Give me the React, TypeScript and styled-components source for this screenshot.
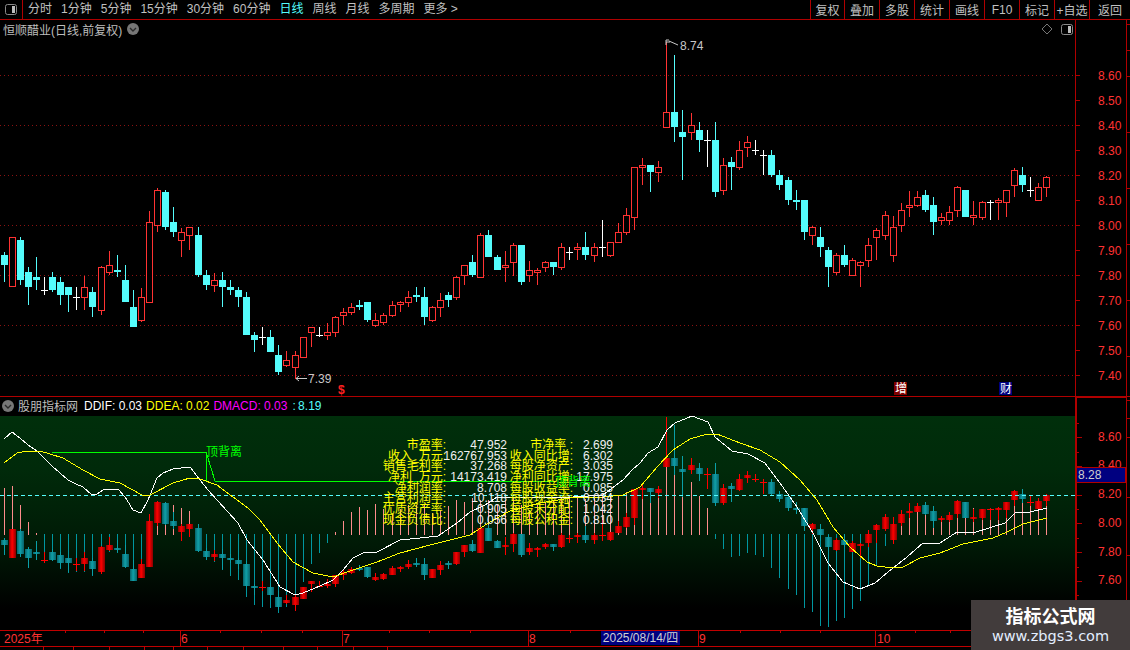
import React from "react";
import styled, { createGlobalStyle } from "styled-components";

const FONT = `"Liberation Sans", "Noto Sans CJK SC", sans-serif`;

const GlobalStyle = createGlobalStyle`
  html, body { margin: 0; padding: 0; background: #000; }
  body { font-family: ${FONT}; font-size: 12px; }
`;

type Row = [number, number, number, number, number];
type Kind = "r" | "c" | "w";
interface Candle { x: number; hi: number; top: number; bot: number; lo: number; kind: Kind; }

const seg = (ox: number, oy: number, rows: [Kind, ...Row][]): Candle[] =>
  rows.map(([kind, zx, h, t, b, l]) => ({
    kind,
    x: Math.floor(ox + zx / 3),
    hi: Math.round(oy + h / 3),
    top: Math.round(oy + t / 3),
    bot: Math.round(oy + b / 3),
    lo: Math.round(oy + l / 3),
  }));

const candles: Candle[] = [
  ...seg(0, 180, [
    ["c", 13, 215, 225, 255, 305], ["r", 37, 172, 172, 322, 322], ["c", 61, 170, 180, 300, 315],
    ["c", 85, 261, 276, 321, 375], ["c", 109, 231, 291, 300, 330], ["w", 133, 291, 331, 331, 345],
    ["c", 157, 276, 291, 330, 335], ["c", 181, 291, 306, 345, 375], ["c", 205, 321, 321, 345, 396],
    ["w", 229, 321, 352, 352, 390], ["r", 253, 288, 322, 353, 390], ["c", 277, 321, 336, 381, 411],
    ["r", 304, 258, 262, 392, 404], ["r", 328, 213, 256, 278, 285], ["c", 352, 225, 270, 276, 291],
    ["c", 376, 255, 300, 366, 366], ["c", 400, 330, 381, 441, 441], ["r", 424, 324, 352, 422, 426],
    ["r", 448, 93, 127, 368, 369], ["r", 472, 24, 31, 137, 156], ["c", 496, 30, 36, 141, 150],
    ["c", 520, 81, 126, 156, 171], ["r", 544, 144, 157, 182, 231], ["r", 568, 141, 142, 167, 210],
    ["c", 595, 141, 165, 285, 291], ["c", 619, 270, 285, 315, 330], ["r", 643, 279, 301, 317, 336],
    ["c", 667, 276, 300, 321, 381], ["c", 691, 300, 321, 330, 345], ["c", 715, 321, 330, 351, 381],
    ["c", 739, 336, 351, 465, 465], ["c", 763, 456, 465, 480, 516], ["w", 787, 441, 471, 471, 495],
    ["c", 811, 450, 471, 516, 516], ["c", 835, 495, 525, 576, 585],
  ]),
  ...seg(280, 180, [
    ["r", 19, 513, 541, 557, 561], ["r", 46, 513, 526, 563, 596], ["r", 70, 472, 472, 533, 533],
    ["r", 94, 441, 442, 458, 501], ["w", 118, 441, 466, 466, 471], ["r", 142, 429, 457, 467, 480],
    ["r", 166, 408, 412, 458, 471], ["r", 190, 384, 397, 407, 435], ["r", 214, 369, 382, 398, 405],
    ["c", 238, 360, 375, 381, 390], ["c", 262, 366, 366, 420, 426], ["r", 286, 399, 421, 437, 441],
    ["r", 310, 399, 406, 429, 435], ["r", 337, 363, 376, 408, 411], ["r", 361, 363, 367, 376, 396],
    ["r", 385, 333, 352, 368, 381], ["c", 409, 321, 345, 351, 366], ["c", 433, 321, 351, 411, 435],
    ["r", 457, 378, 382, 422, 426], ["r", 481, 339, 361, 383, 411], ["c", 505, 336, 345, 360, 381],
    ["r", 529, 288, 292, 353, 360], ["r", 553, 255, 256, 287, 315], ["c", 577, 225, 246, 285, 291],
    ["r", 601, 159, 166, 293, 294], ["c", 625, 150, 165, 231, 231], ["c", 652, 225, 231, 270, 270],
    ["r", 676, 213, 256, 263, 306], ["r", 700, 189, 196, 248, 288], ["c", 724, 195, 195, 306, 315],
    ["r", 748, 243, 271, 287, 306], ["r", 772, 264, 271, 278, 315], ["r", 796, 243, 247, 263, 276],
    ["c", 820, 246, 246, 261, 285],
  ]),
  ...seg(560, 30, [
    ["r", 4, 640, 652, 713, 720], ["w", 27, 651, 666, 666, 690], ["r", 52, 640, 652, 661, 690],
    ["c", 76, 606, 652, 675, 690], ["r", 103, 640, 652, 677, 696], ["w", 127, 570, 652, 652, 681],
    ["r", 151, 636, 637, 677, 681], ["r", 175, 579, 607, 638, 639], ["r", 199, 534, 556, 608, 615],
    ["r", 223, 412, 412, 563, 600], ["r", 247, 384, 406, 413, 465], ["c", 271, 405, 405, 426, 486],
    ["r", 295, 393, 412, 428, 456], ["r", 319, 37, 247, 293, 293], ["c", 343, 75, 246, 291, 336],
    ["c", 367, 240, 306, 321, 450], ["r", 394, 249, 286, 308, 330], ["c", 418, 276, 300, 330, 366],
    ["w", 442, 300, 331, 331, 411], ["c", 466, 276, 330, 486, 501], ["r", 490, 384, 406, 482, 495],
    ["c", 514, 381, 396, 411, 480], ["r", 538, 333, 361, 413, 420], ["r", 562, 318, 337, 353, 381],
    ["w", 586, 330, 361, 361, 375], ["w", 610, 360, 376, 376, 435], ["c", 634, 360, 375, 435, 441],
    ["c", 658, 420, 435, 465, 480], ["c", 685, 441, 450, 510, 525], ["c", 709, 480, 510, 516, 540],
    ["c", 733, 510, 510, 606, 630], ["r", 757, 588, 592, 617, 645], ["c", 781, 591, 621, 651, 681],
    ["c", 805, 651, 660, 711, 771], ["r", 829, 669, 676, 728, 735],
  ]),
  ...seg(800, 140, [
    ["c", 133, 315, 345, 375, 381], ["r", 157, 354, 361, 407, 408], ["r", 181, 363, 367, 377, 441],
    ["r", 205, 294, 316, 362, 381], ["r", 229, 264, 271, 293, 360], ["r", 256, 213, 226, 287, 300],
    ["r", 280, 228, 262, 347, 366], ["r", 304, 189, 211, 257, 276], ["r", 328, 153, 196, 203, 231],
    ["r", 352, 153, 172, 197, 201], ["c", 376, 150, 165, 210, 216], ["c", 400, 171, 195, 246, 285],
    ["r", 424, 219, 232, 242, 256], ["r", 448, 198, 217, 242, 256], ["r", 472, 138, 142, 212, 231],
    ["c", 496, 150, 150, 231, 231], ["r", 520, 183, 226, 233, 255], ["r", 547, 183, 187, 233, 240],
    ["w", 571, 180, 187, 187, 240], ["r", 595, 174, 181, 188, 240], ["r", 619, 151, 151, 188, 231],
    ["r", 643, 84, 91, 137, 171], ["c", 667, 81, 105, 135, 156], ["w", 691, 111, 151, 151, 171],
    ["r", 715, 129, 142, 182, 183], ["r", 739, 108, 112, 143, 171],
  ]),
];

const histY = [
  488, 486, 505, 522, 533, 560, 553, 569, 573, 572, 572, 576, 573, 552, 553, 568, 580, 577, 538, 505,
  505, 505, 508, 511, 533, 557, 562, 570, 576, 580, 597, 605, 607, 608, 613, 607, 610, 582, 564, 553,
  543, 532, 521, 512, 507, 510, 504, 509, 514, 509, 505, 505, 504, 513, 510, 506, 500, 502, 498, 500,
  500, 505, 500, 498, 505, 510, 505, 503, 500, 498, 495, 497, 499, 495, 493, 493, 495, 492, 490, 487,
  488, 493, 467, 467, 478, 482, 496, 508, 539, 549, 557, 556, 553, 555, 557, 568, 578, 589, 595, 608,
  612, 626, 627, 621, 618, 609, 601, 585, 566, 546, 530, 521, 503, 508, 507, 508, 517, 515, 502, 513,
  508, 510, 508, 508, 503, 490, 495, 503, 500, 497,
];

const whiteLine = `4,439 12,432 20,438 28,445 37,451 52,466 68,480 76,484 83,487 92,495 97,494 103,490 118,489 125,497 127,500 133,510 141,513 148,500 157,478 163,473 173,469 190,467 200,480 208,490 217,500 238,523 247,540 263,560 280,587 295,595 303,593 320,586 333,580 343,570 353,558 363,553 377,552 400,540 420,538 438,536 457,523 470,512 485,505 497,497 573,497 603,495 623,480 632,470 640,463 648,453 658,447 667,430 675,423 692,416 708,422 715,437 732,451 748,454 765,463 780,483 797,507 813,533 828,563 843,582 860,589 875,583 888,572 907,557 923,543 940,543 957,532 973,533 1005,523 1015,513 1030,512 1047,508`;
const yellowLine = `4,463 17,453 28,451 40,451 63,458 83,470 100,479 120,483 142,495 150,495 173,483 190,478 200,479 217,485 233,497 248,508 260,520 277,543 293,562 313,573 333,577 353,570 377,562 400,553 430,545 470,535 490,522 510,511 540,503 570,498 603,497 623,495 640,487 657,467 673,450 690,439 707,434 717,434 740,443 760,450 780,462 800,480 817,500 833,527 850,547 867,562 877,566 893,568 903,567 920,558 940,553 963,544 993,538 1007,532 1023,524 1047,518`;

const toLower = (y: number) => Math.round(523 + (y - 226) * 0.574);

const RED = "#ff3232";
const CYAN = "#54fcfc";

const UpperCandle: React.FC<{ c: Candle }> = ({ c }) => {
  const wx = c.x + 0.5;
  if (c.kind === "w") {
    return (
      <g stroke="#fff">
        <line x1={wx} x2={wx} y1={c.hi} y2={c.lo} />
        <line x1={c.x - 3} x2={c.x + 4} y1={c.top + 0.5} y2={c.top + 0.5} />
      </g>
    );
  }
  if (c.kind === "c") {
    return (
      <g>
        <line x1={wx} x2={wx} y1={c.hi} y2={c.lo} stroke={CYAN} />
        <rect x={c.x - 3} y={c.top} width={7} height={Math.max(2, c.bot - c.top)} fill={CYAN} />
      </g>
    );
  }
  return (
    <g stroke={RED} fill="#000">
      <line x1={wx} x2={wx} y1={c.hi} y2={c.top} />
      <line x1={wx} x2={wx} y1={c.bot} y2={c.lo} />
      <rect x={c.x - 2.5} y={c.top + 0.5} width={6} height={Math.max(2, c.bot - c.top - 1)} />
    </g>
  );
};

const LowerCandle: React.FC<{ c: Candle }> = ({ c }) => {
  const wx = c.x + 0.5;
  const top = toLower(c.top);
  const bot = toLower(c.bot);
  const hi = toLower(c.hi);
  const lo = toLower(c.lo);
  if (c.kind === "w") {
    return (
      <g stroke="#f00">
        <line x1={wx} x2={wx} y1={hi} y2={lo} />
        <line x1={c.x - 3} x2={c.x + 4} y1={top + 0.5} y2={top + 0.5} />
      </g>
    );
  }
  const teal = c.kind === "c";
  return (
    <g>
      <line x1={wx} x2={wx} y1={hi} y2={lo} stroke={teal ? "#0aa0a8" : "#f00"} />
      <rect x={c.x - 3} y={top} width={7} height={Math.max(2, bot - top)} fill={teal ? "url(#tealBody)" : "url(#redBody)"} />
    </g>
  );
};

const Screen = styled.div`
  position: relative;
  width: 1130px;
  height: 650px;
  overflow: hidden;
  background: #000;
  color: #c0c0c0;
  font-family: ${FONT};
  font-size: 12px;
  display: flex;
  flex-direction: column;
`;

const Toolbar = styled.div`
  display: flex;
  align-items: stretch;
  height: 19px;
  border-bottom: 1px solid #b00000;
  flex: none;
`;

const ToggleBox = styled.div`
  width: 23px;
  border-right: 1px solid #b00000;
  box-sizing: border-box;
  display: flex;
  align-items: center;
  justify-content: center;
`;

const MenuList = styled.div`
  display: flex;
  align-items: center;
  gap: 9px;
  padding-left: 5px;
  flex: 1;
`;

const MenuItem = styled.span<{ $active?: boolean }>`
  color: ${(p) => (p.$active ? "#54fcfc" : "#c0c0c0")};
  white-space: nowrap;
  line-height: 19px;
`;

const ToolButton = styled.div<{ $w: number }>`
  width: ${(p) => p.$w}px;
  border-left: 1px solid #b00000;
  box-sizing: border-box;
  display: flex;
  align-items: center;
  justify-content: center;
  white-space: nowrap;
`;

const UpperPanel = styled.div`
  display: flex;
  height: 377px;
  flex: none;
  border-bottom: 1px solid #b00000;
  box-sizing: border-box;
`;

const Plot = styled.div`
  position: relative;
  width: 1075px;
  flex: none;
  svg { display: block; }
`;

const TitleOverlay = styled.div`
  position: absolute;
  left: 3px;
  top: 1px;
  display: flex;
  align-items: center;
  gap: 5px;
  height: 16px;
  color: #bdbdbd;
  white-space: nowrap;
`;

const CornerIcons = styled.div`
  position: absolute;
  right: 2px;
  top: 3px;
  display: flex;
  align-items: center;
  gap: 8px;
`;

const LowerSection = styled.div`
  display: flex;
  height: 233px;
  flex: none;
  position: relative;
`;

const LowerColumn = styled.div`
  width: 1075px;
  flex: none;
  display: flex;
  flex-direction: column;
`;

const IndicatorHeader = styled.div`
  height: 17px;
  padding: 0 0 2px 2px;
  display: flex;
  align-items: center;
  flex: none;
  white-space: nowrap;
`;

const IndicatorName = styled.span`
  color: #bdbdbd;
  margin: 0 6px 0 4px;
`;

const Reading = styled.span<{ $color: string; $gap: number; $tight?: boolean }>`
  color: ${(p) => p.$color};
  margin-right: ${(p) => p.$gap}px;
  word-spacing: ${(p) => (p.$tight ? "-1px" : "0")};
`;

const LowerPlot = styled(Plot)`
  height: 214px;
  background: linear-gradient(#002f0b 0%, #002a0a 25%, #001a06 60%, #000 90%);
  overflow: hidden;
`;

const PriceBadge = styled.div`
  position: absolute;
  left: 1076px;
  top: 70px;
  width: 50px;
  height: 16px;
  box-sizing: border-box;
  background: #000080;
  border: 1px solid #b00000;
  color: #cfcfcf;
  line-height: 14px;
  padding-left: 1px;
`;

const StatsGrid = styled.div`
  position: absolute;
  left: 376px;
  top: 24px;
  display: grid;
  grid-template-columns: 70px 61px 66px 40px;
  grid-auto-rows: 10.7px;
  line-height: 10.7px;
  white-space: nowrap;
`;

const StatLabel = styled.span`
  color: #ffff00;
  justify-self: end;
`;

const StatValue = styled.span`
  color: #f0f0f0;
  justify-self: end;
`;

const DivergenceTag = styled.span<{ $left: number; $top: number }>`
  position: absolute;
  left: ${(p) => p.$left}px;
  top: ${(p) => p.$top}px;
  color: #00ff00;
  white-space: nowrap;
  line-height: 14px;
`;

const DateStrip = styled.div`
  position: relative;
  height: 20px;
  flex: none;
  border-top: 1px solid #c00000;
  box-sizing: border-box;
  svg { display: block; }
`;

const DateBadge = styled.div`
  position: absolute;
  left: 601px;
  top: 0;
  width: 79px;
  height: 14px;
  background: #000080;
  color: #d0d0d0;
  line-height: 14px;
  text-align: center;
  white-space: nowrap;
`;

const Watermark = styled.div`
  position: absolute;
  right: 0;
  bottom: 0;
  width: 159px;
  height: 50px;
  padding-bottom: 3px;
  box-sizing: border-box;
  background: #423c3c;
  display: flex;
  flex-direction: column;
  align-items: center;
  justify-content: center;
  color: #fff;
`;

const WatermarkTitle = styled.div`
  font-family: "Noto Sans CJK SC", sans-serif;
  font-size: 18px;
  font-weight: 700;
  line-height: 24px;
`;

const WatermarkUrl = styled.div`
  font-family: "DejaVu Sans", sans-serif;
  font-size: 14.5px;
  line-height: 18px;
  color: #e4eeff;
`;

const toolButtons: [string, number][] = [
  ["复权", 34], ["叠加", 35], ["多股", 35], ["统计", 35], ["画线", 35],
  ["F10", 35], ["标记", 35], ["+自选", 35], ["返回", 41],
];

const menu = ["分时", "1分钟", "5分钟", "15分钟", "30分钟", "60分钟", "日线", "周线", "月线", "多周期"];

const stats: [string, string, string, string][] = [
  ["市盈率:", "47.952", "市净率 :", "2.699"],
  ["收入_万元:", "162767.953", "收入同比增:", "6.302"],
  ["销售毛利率:", "37.268", "每股净资产:", "3.035"],
  ["净利_万元:", "14173.419", "净利同比增:", "17.975"],
  ["净利润率:", "8.708", "每股收益率:", "0.085"],
  ["主营利润率:", "10.118", "每股现金流:", "0.034"],
  ["优质资产率:", "0.905", "每股未分配:", "1.042"],
  ["现金负债比:", "0.056", "每股公积金:", "0.810"],
];

const upperPrices = ["8.60", "8.50", "8.40", "8.30", "8.20", "8.10", "8.00", "7.90", "7.80", "7.70", "7.60", "7.50", "7.40"];
const lowerPrices: [string, number][] = [["8.60", 437], ["8.40", 465], ["8.20", 494], ["8.00", 523], ["7.80", 552], ["7.60", 580]];

const SideToggle: React.FC = () => (
  <svg width="12" height="11" viewBox="0 0 12 11">
    <rect x="0.5" y="0.5" width="11" height="10" rx="2" fill="none" stroke="#8a8a8a" />
    <rect x="7" y="2" width="3" height="7" fill="#bdbdbd" />
  </svg>
);

const Chevron: React.FC = () => (
  <svg width="12" height="12" viewBox="0 0 12 12">
    <circle cx="6" cy="6" r="6" fill="#777" />
    <path d="M3 5 L6 8 L9 5" fill="none" stroke="#2a2a2a" strokeWidth="1.4" />
  </svg>
);

const Grid: React.FC = () => (
  <g stroke="#8a1212" strokeDasharray="1 3" shapeRendering="crispEdges">
    {[75, 125, 175, 225, 275, 325, 375].map((y) => (
      <line key={y} x1={0} x2={1075} y1={y + 0.5} y2={y + 0.5} />
    ))}
  </g>
);

const AxisText: React.FC<{ y: number; children: string }> = ({ y, children }) => (
  <text x={1098} y={y + 4} fill="#ff3232" fontSize="12" fontFamily="Liberation Sans, sans-serif">{children}</text>
);

const UpperAxis: React.FC = () => (
  <svg width="55" height="376" viewBox="1075 20 55 376" shapeRendering="crispEdges" style={{ display: "block", flex: "none" }}>
    <line x1={1075.5} x2={1075.5} y1={20} y2={396} stroke="#b00000" />
    <line x1={1126.5} x2={1126.5} y1={20} y2={396} stroke="#b00000" />
    {upperPrices.map((p, i) => {
      const y = 76 + i * 25;
      return (
        <g key={p}>
          <line x1={1075} x2={1080} y1={y - 0.5} y2={y - 0.5} stroke="#b00000" />
          <AxisText y={y}>{p}</AxisText>
        </g>
      );
    })}
    {[24, 50, 76, 132, 188, 244, 300, 356].map((y) => (
      <line key={y} x1={1127} x2={1130} y1={y + 0.5} y2={y + 0.5} stroke="#b00000" />
    ))}
  </svg>
);

const LowerAxis: React.FC = () => (
  <svg width="55" height="233" viewBox="1075 397 55 233" shapeRendering="crispEdges" style={{ display: "block", flex: "none" }}>
    <rect x={1075} y={397} width={2} height={233} fill="#b00000" />
    <rect x={1075} y={397} width={52} height={1} fill="#b00000" />
    <line x1={1126.5} x2={1126.5} y1={397} y2={630} stroke="#b00000" />
    {Array.from({ length: 16 }, (_, i) => 423 + i * 14.35).map((y, i) => (
      <line key={i} x1={1076} x2={i % 2 === 1 ? 1082 : 1079} y1={Math.round(y) + 0.5} y2={Math.round(y) + 0.5} stroke="#b00000" />
    ))}
    {lowerPrices.map(([p, y]) => (
      <AxisText key={p} y={y}>{p}</AxisText>
    ))}
    {[400, 418, 437, 497, 555].map((y) => (
      <line key={y} x1={1127} x2={1130} y1={y + 0.5} y2={y + 0.5} stroke="#b00000" />
    ))}
  </svg>
);

const UpperChart: React.FC = () => (
  <svg width="1075" height="376" viewBox="0 20 1075 376" shapeRendering="crispEdges">
    <Grid />
    {candles.map((c, i) => <UpperCandle key={i} c={c} />)}
    <g stroke="#c8c8c8" fill="none" shapeRendering="auto">
      <path d="M666 45 V40 H669 M666 42 H670 M669 41 L678 45" />
      <path d="M296 378.5 H307 M296 378.5 L299 376 M296 378.5 L299 381" />
    </g>
    <text x={680} y={50} fill="#c8c8c8" fontSize="12" fontFamily="Liberation Sans, sans-serif">8.74</text>
    <text x={308} y={383} fill="#c8c8c8" fontSize="12" fontFamily="Liberation Sans, sans-serif">7.39</text>
    <text x={338} y={394} fill="#ff2020" fontSize="12" fontWeight="700" fontFamily="Liberation Sans, sans-serif">$</text>
    <rect x={894} y={382} width={13} height={13} fill="#800000" />
    <text x={895} y={393} fill="#fff" fontSize="12" fontFamily="Noto Sans CJK SC, sans-serif">增</text>
    <rect x={999} y={382} width={13} height={13} fill="#000080" />
    <text x={1000} y={393} fill="#fff" fontSize="12" fontFamily="Noto Sans CJK SC, sans-serif">财</text>
  </svg>
);

const LowerChart: React.FC = () => (
  <svg width="1075" height="214" viewBox="0 416 1075 214" shapeRendering="crispEdges">
    <defs>
      <linearGradient id="redBody" x1="0" x2="1" y1="0" y2="0">
        <stop offset="0" stopColor="#8a0000" />
        <stop offset="0.45" stopColor="#ff0000" />
        <stop offset="1" stopColor="#8a0000" />
      </linearGradient>
      <linearGradient id="tealBody" x1="0" x2="1" y1="0" y2="0">
        <stop offset="0" stopColor="#07626a" />
        <stop offset="0.45" stopColor="#10a0a8" />
        <stop offset="1" stopColor="#07626a" />
      </linearGradient>
    </defs>
    {candles.map((c, i) => {
      const y = histY[i];
      const up = y < 534.5;
      return (
        <line
          key={i}
          x1={c.x + 0.5}
          x2={c.x + 0.5}
          y1={y}
          y2={up ? 535 : 534}
          stroke={up ? "#ff8c8c" : "#0097a0"}
        />
      );
    })}
    {candles.map((c, i) => <LowerCandle key={i} c={c} />)}
    <line x1={0} x2={1075} y1={495.5} y2={495.5} stroke="#54fcfc" strokeDasharray="4 3" />
    <polyline points={whiteLine} fill="none" stroke="#fff" />
    <polyline points={yellowLine} fill="none" stroke="#ff0" />
    <rect x={52} y={452} width={155} height={1} fill="#00ff00" />
    <rect x={206} y={452} width={1} height={29} fill="#00ff00" />
    <line x1={207} x2={215} y1={455} y2={481} stroke="#00ff00" />
    <rect x={215} y={481} width={340} height={1} fill="#00ff00" />
  </svg>
);

const DateAxis: React.FC = () => {
  const labels: [string, number][] = [["2025年", 4], ["6", 181], ["7", 343], ["8", 529], ["9", 699], ["10", 877]];
  return (
    <svg width="1130" height="19" viewBox="0 631 1130 19" shapeRendering="crispEdges">
      {[180, 342, 528, 698, 875].map((x) => (
        <line key={x} x1={x + 0.5} x2={x + 0.5} y1={631} y2={646} stroke="#c00000" />
      ))}
      {[65, 104, 143, 220, 261, 302, 389, 429, 470, 570, 740, 780, 820, 915, 950].map((x) => (
        <line key={x} x1={x + 0.5} x2={x + 0.5} y1={631} y2={633} stroke="#c00000" />
      ))}
      <line x1={0} x2={1130} y1={646.5} y2={646.5} stroke="#c00000" />
      {[43, 73, 109, 144, 173, 207, 243, 283, 317, 353, 387].map((x) => (
        <line key={x} x1={x + 0.5} x2={x + 0.5} y1={647} y2={650} stroke="#c00000" />
      ))}
      {labels.map(([t, x]) => (
        <text key={t} x={x} y={643} fill="#ff3232" fontSize="12" fontFamily="Liberation Sans, Noto Sans CJK SC, sans-serif">{t}</text>
      ))}
    </svg>
  );
};

export default function App() {
  return (
    <Screen>
      <GlobalStyle />
      <Toolbar>
        <ToggleBox><SideToggle /></ToggleBox>
        <MenuList>
          {menu.map((m) => (
            <MenuItem key={m} $active={m === "日线"}>{m}</MenuItem>
          ))}
          <MenuItem>更多 &gt;</MenuItem>
        </MenuList>
        {toolButtons.map(([t, w]) => (
          <ToolButton key={t} $w={w}>{t}</ToolButton>
        ))}
      </Toolbar>
      <UpperPanel>
        <Plot>
          <UpperChart />
          <TitleOverlay>
            <span>恒顺醋业(日线,前复权)</span>
            <Chevron />
          </TitleOverlay>
          <CornerIcons>
            <svg width="12" height="12" viewBox="0 0 12 12">
              <path d="M6 1 L11 6 L6 11 L1 6 Z" fill="none" stroke="#777" />
            </svg>
            <SideToggle />
          </CornerIcons>
        </Plot>
        <UpperAxis />
      </UpperPanel>
      <LowerSection>
        <LowerColumn>
          <IndicatorHeader>
            <Chevron />
            <IndicatorName>股朋指标网</IndicatorName>
            <Reading $color="#ffffff" $gap={4}>DDIF: 0.03</Reading>
            <Reading $color="#ffff00" $gap={4}>DDEA: 0.02</Reading>
            <Reading $color="#ff00ff" $gap={5}>DMACD: 0.03</Reading>
            <Reading $color="#54fcfc" $gap={0} $tight>: 8.19</Reading>
          </IndicatorHeader>
          <LowerPlot>
            <LowerChart />
            <StatsGrid>
              {stats.map((r) => (
                <React.Fragment key={r[0]}>
                  <StatLabel>{r[0]}</StatLabel>
                  <StatValue>{r[1]}</StatValue>
                  <StatLabel>{r[2]}</StatLabel>
                  <StatValue>{r[3]}</StatValue>
                </React.Fragment>
              ))}
            </StatsGrid>
            <DivergenceTag $left={206} $top={29}>顶背离</DivergenceTag>
            <DivergenceTag $left={555} $top={59}>顶背离</DivergenceTag>
          </LowerPlot>
        </LowerColumn>
        <LowerAxis />
        <PriceBadge>8.28</PriceBadge>
      </LowerSection>
      <DateStrip>
        <DateAxis />
        <DateBadge>2025/08/14/四</DateBadge>
      </DateStrip>
      <Watermark>
        <WatermarkTitle>指标公式网</WatermarkTitle>
        <WatermarkUrl>www.zbgs3.com</WatermarkUrl>
      </Watermark>
    </Screen>
  );
}
